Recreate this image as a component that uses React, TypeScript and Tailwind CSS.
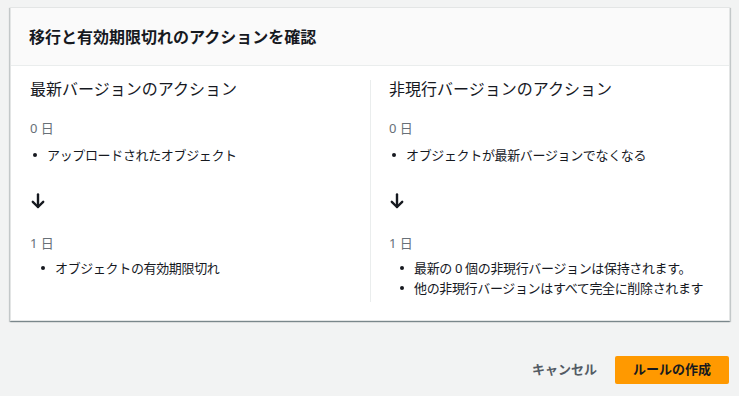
import React from "react";

const font = { fontFamily: '"Noto Sans", "Noto Sans CJK JP", sans-serif' };

function Dot() {
  return <span className="inline-block w-[4px] h-[4px] rounded-full bg-[#16191f] shrink-0" />;
}

function Item({ text, indent }: { text: string; indent: "a" | "b" }) {
  return (
    <li className={`flex items-center h-[20px] ${indent === "a" ? "pl-[3px]" : "pl-[11px]"}`}>
      <Dot />
      <span className="ml-[10px] whitespace-nowrap tracking-[-0.35px]">{text}</span>
    </li>
  );
}

function Arrow() {
  return (
    <svg width="14" height="16" viewBox="0 0 14 16" fill="none" stroke="#16191f" strokeWidth="2.4" strokeLinecap="round" strokeLinejoin="round">
      <path d="M7 1.5 V14" />
      <path d="M1.8 8.8 L7 14 L12.2 8.8" />
    </svg>
  );
}

function Column({
  title,
  first,
  second,
  border,
}: {
  title: string;
  first: string[];
  second: string[];
  border?: boolean;
}) {
  return (
    <div className={`flex-1 flex flex-col pb-[4px] ${border ? "border-l border-[#eaeded] pl-[18px]" : "pl-[19px]"}`}>
      <div className="h-[18px] leading-[18px] text-[16px] text-[#16191f] whitespace-nowrap">{title}</div>
      <div className="mt-[20px] h-[20px] leading-[20px] text-[13px] text-[#687078]">0 日</div>
      <ul className="mt-[7px] text-[13px] leading-[20px] text-[#16191f]">
        {first.map((t) => (
          <Item key={t} text={t} indent="a" />
        ))}
      </ul>
      <div className="mt-[26px] h-[20px] flex items-center pl-[1px]">
        <Arrow />
      </div>
      <div className="mt-[22px] h-[20px] leading-[20px] text-[13px] text-[#687078]">1 日</div>
      <ul className="mt-[5px] text-[13px] leading-[20px] text-[#16191f]">
        {second.map((t) => (
          <Item key={t} text={t} indent="b" />
        ))}
      </ul>
    </div>
  );
}

export default function App() {
  return (
    <div className="w-[739px] h-[396px] bg-[#f2f3f3] overflow-hidden" style={font}>
      <div className="pt-[7px] px-[10px]">
        <div className="w-[720px] bg-white border border-[#e3e5e5] shadow-[0_1px_1px_0_rgba(0,28,36,0.3),1px_1px_1px_0_rgba(0,28,36,0.15),-1px_1px_1px_0_rgba(0,28,36,0.15)]">
          <div className="h-[58px] bg-[#fafafa] border-b border-[#eaeded] flex items-center pl-[18px]">
            <h2 className="text-[16px] font-bold text-[#16191f] leading-[20px]">
              移行と有効期限切れのアクションを確認
            </h2>
          </div>
          <div className="pt-[14px] pb-[18px] flex">
            <Column
              title="最新バージョンのアクション"
              first={["アップロードされたオブジェクト"]}
              second={["オブジェクトの有効期限切れ"]}
            />
            <Column
              border
              title="非現行バージョンのアクション"
              first={["オブジェクトが最新バージョンでなくなる"]}
              second={["最新の 0 個の非現行バージョンは保持されます。", "他の非現行バージョンはすべて完全に削除されます"]}
            />
          </div>
        </div>
      </div>
      <div className="mt-[35px] pr-[10px] flex justify-end items-center">
        <button className="h-[28px] px-[18px] text-[13px] font-bold text-[#545b64]">キャンセル</button>
        <button className="h-[28px] w-[114px] rounded-[2px] bg-[#ff9900] text-[13px] font-bold text-[#16191f]">
          ルールの作成
        </button>
      </div>
    </div>
  );
}
